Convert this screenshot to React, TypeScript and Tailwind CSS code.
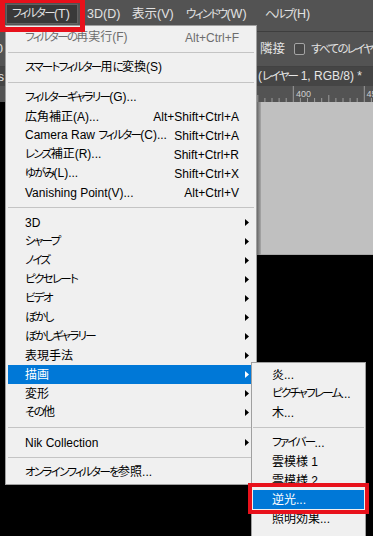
import React from "react";

type MenuItem =
    | { label: string; shortcut?: string; sub?: boolean; disabled?: boolean; active?: boolean }
    | "sep";

const mainItems: MenuItem[] = [
    { label: "フィルターの再実行(F)", shortcut: "Alt+Ctrl+F", disabled: true },
    "sep",
    { label: "スマートフィルター用に変換(S)" },
    "sep",
    { label: "フィルターギャラリー(G)..." },
    { label: "広角補正(A)...", shortcut: "Alt+Shift+Ctrl+A" },
    { label: "Camera Raw フィルター(C)...", shortcut: "Shift+Ctrl+A" },
    { label: "レンズ補正(R)...", shortcut: "Shift+Ctrl+R" },
    { label: "ゆがみ(L)...", shortcut: "Shift+Ctrl+X" },
    { label: "Vanishing Point(V)...", shortcut: "Alt+Ctrl+V" },
    "sep",
    { label: "3D", sub: true },
    { label: "シャープ", sub: true },
    { label: "ノイズ", sub: true },
    { label: "ピクセレート", sub: true },
    { label: "ビデオ", sub: true },
    { label: "ぼかし", sub: true },
    { label: "ぼかしギャラリー", sub: true },
    { label: "表現手法", sub: true },
    { label: "描画", sub: true, active: true },
    { label: "変形", sub: true },
    { label: "その他", sub: true },
    "sep",
    { label: "Nik Collection", sub: true },
    "sep",
    { label: "オンラインフィルターを参照..." },
];

const subItems: MenuItem[] = [
    { label: "炎..." },
    { label: "ピクチャフレーム..." },
    { label: "木..." },
    "sep",
    { label: "ファイバー..." },
    { label: "雲模様 1" },
    { label: "雲模様 2" },
    { label: "逆光...", active: true },
    { label: "照明効果..." },
];

// Meiryo UI draws kana narrow; squeeze kana runs so line lengths match
function JP({ text }: { text: string }) {
    const parts = text.split(/([\u3040-\u30ff]+)/);
    return (
        <>
            {parts.map((p, i) =>
                /^[\u3040-\u30ff]+$/.test(p) ? (
                    <span key={i} className="text-[11.5px] tracking-[-1.7px]">
                        {p}
                    </span>
                ) : (
                    <React.Fragment key={i}>{p}</React.Fragment>
                )
            )}
        </>
    );
}

function Arrow({ white }: { white?: boolean }) {
    return (
        <svg width="4" height="7" viewBox="0 0 4 7">
            <polygon points="0,0 4,3.5 0,7" fill={white ? "#ffffff" : "#000000"} />
        </svg>
    );
}

function Separator({ inset }: { inset: string }) {
    return <div className={`${inset} mt-[5px] mb-[5px] h-px bg-[#c4c4c4]`} />;
}

function RulerTicks() {
    const ticks = [];
    for (let i = -40; i <= 12; i++) {
        const x = 293.3 + i * 7.1;
        const major = i % 10 === 0;
        const half = !major && i % 5 === 0;
        const y1 = major ? 0 : half ? 9 : 12;
        ticks.push(<line key={i} x1={x} y1={y1} x2={x} y2={16} stroke="#9c9c9c" strokeWidth="1" />);
    }
    return (
        <svg width="373" height="16" viewBox="0 0 373 16" className="block">
            {ticks}
            <text x="296" y="11" fontSize="9" fill="#cfcfcf" fontFamily="Liberation Sans, sans-serif">400</text>
            <text x="366.5" y="11" fontSize="9" fill="#cfcfcf" fontFamily="Liberation Sans, sans-serif">450</text>
        </svg>
    );
}

export default function App() {
    return (
        <div className="relative w-[373px] h-[536px] overflow-hidden bg-black font-['Liberation_Sans','Noto_Sans_CJK_JP',sans-serif] [font-feature-settings:'palt'] text-[12px]">
            {/* Photoshop window behind the menus */}
            <div className="flex flex-col h-full">
                <div className="h-[32px] bg-[#535353] border-b border-[#3e3e3e] pt-[4px] shrink-0">
                    <div className="flex h-[20px] items-center text-[12.5px] text-[#e2e2e2] whitespace-nowrap">
                        <div className="ml-[6px] w-[72px] h-[20px] flex items-center pl-[5px] bg-[#393939] border border-[#616161]">
                            <JP text="フィルター(T)" />
                        </div>
                        <div className="w-[48px] pl-[9px]">3D(D)</div>
                        <div className="w-[54px] pl-[6px]">表示(V)</div>
                        <div className="w-[79px] pl-[6px]"><JP text="ウィンドウ(W)" /></div>
                        <div className="pl-[6px]"><JP text="ヘルプ(H)" /></div>
                    </div>
                </div>
                <div className="h-[35px] bg-[#535353] border-b border-[#424242] flex items-center text-[12.5px] text-[#e2e2e2] whitespace-nowrap shrink-0">
                    <span className="-ml-[4px] w-[264px] shrink-0">0</span>
                    <span className="shrink-0">隣接</span>
                    <span className="ml-[9px] w-[11px] h-[12px] shrink-0 rounded-[2px] border border-[#a4a4a4] bg-[#484848]" />
                    <span className="ml-[6px] shrink-0"><JP text="すべてのレイヤー" /></span>
                </div>
                <div className="h-[19px] bg-[#454545] flex items-center text-[12px] text-[#e6e6e6] whitespace-nowrap shrink-0">
                    <span className="-ml-[2px] w-[260px] shrink-0">s</span>
                    <span className="shrink-0"><JP text="(レイヤー 1, RGB/8) *" /></span>
                </div>
                <div className="h-[16px] bg-[#535353] shrink-0">
                    <RulerTicks />
                </div>
                <div className="h-[153px] flex shrink-0">
                    <div className="w-[257px] bg-black" />
                    <div className="w-[4px] bg-gradient-to-r from-[#6a6a6a] to-[#a8a8a8]" />
                    <div className="flex-1 bg-[#c0c0c0] border-b border-[#a9a9a9]" />
                </div>
                <div className="flex-1 bg-black" />
            </div>

            {/* フィルター menu */}
            <div className="absolute left-[5px] top-[25px] w-[252px] bg-[#f0f0f0] border border-[#a0a0a0] pt-[2px] pb-[2px] text-black">
                {mainItems.map((item, i) =>
                    item === "sep" ? (
                        <Separator key={i} inset="mx-[2px]" />
                    ) : (
                        <div
                            key={i}
                            className={`mx-[2px] h-[19px] flex items-center pl-[17px] whitespace-nowrap ${item.active ? "bg-[#0078d7] text-white" : ""} ${item.disabled ? "text-[#6d6d6d]" : ""}`}
                        >
                            <span className="flex-1"><JP text={item.label} /></span>
                            {item.shortcut && <span>{item.shortcut}</span>}
                            <span className="w-[15px] pl-[6px] flex items-center">
                                {item.sub && <Arrow white={item.active} />}
                            </span>
                        </div>
                    )
                )}
            </div>

            {/* 描画 submenu */}
            <div className="absolute left-[251px] top-[362px] w-[115px] bg-[#f0f0f0] border border-[#a0a0a0] pt-[2px] pb-[12px] text-black">
                {subItems.map((item, i) =>
                    item === "sep" ? (
                        <Separator key={i} inset="mx-[1px]" />
                    ) : (
                        <div
                            key={i}
                            className={`mx-[1px] h-[19px] flex items-center pl-[19px] whitespace-nowrap ${item.active ? "bg-[#0078d7] text-white" : ""}`}
                        >
                            <JP text={item.label} />
                        </div>
                    )
                )}
            </div>

            {/* red highlight boxes */}
            <div className="absolute left-0 top-0 w-[85px] h-[32px] border-[5px] border-t-[3px] border-[#e8111b]" />
            <div className="absolute left-[248px] top-[483px] w-[121px] h-[31px] border-[4px] border-[#e8111b]" />
        </div>
    );
}
